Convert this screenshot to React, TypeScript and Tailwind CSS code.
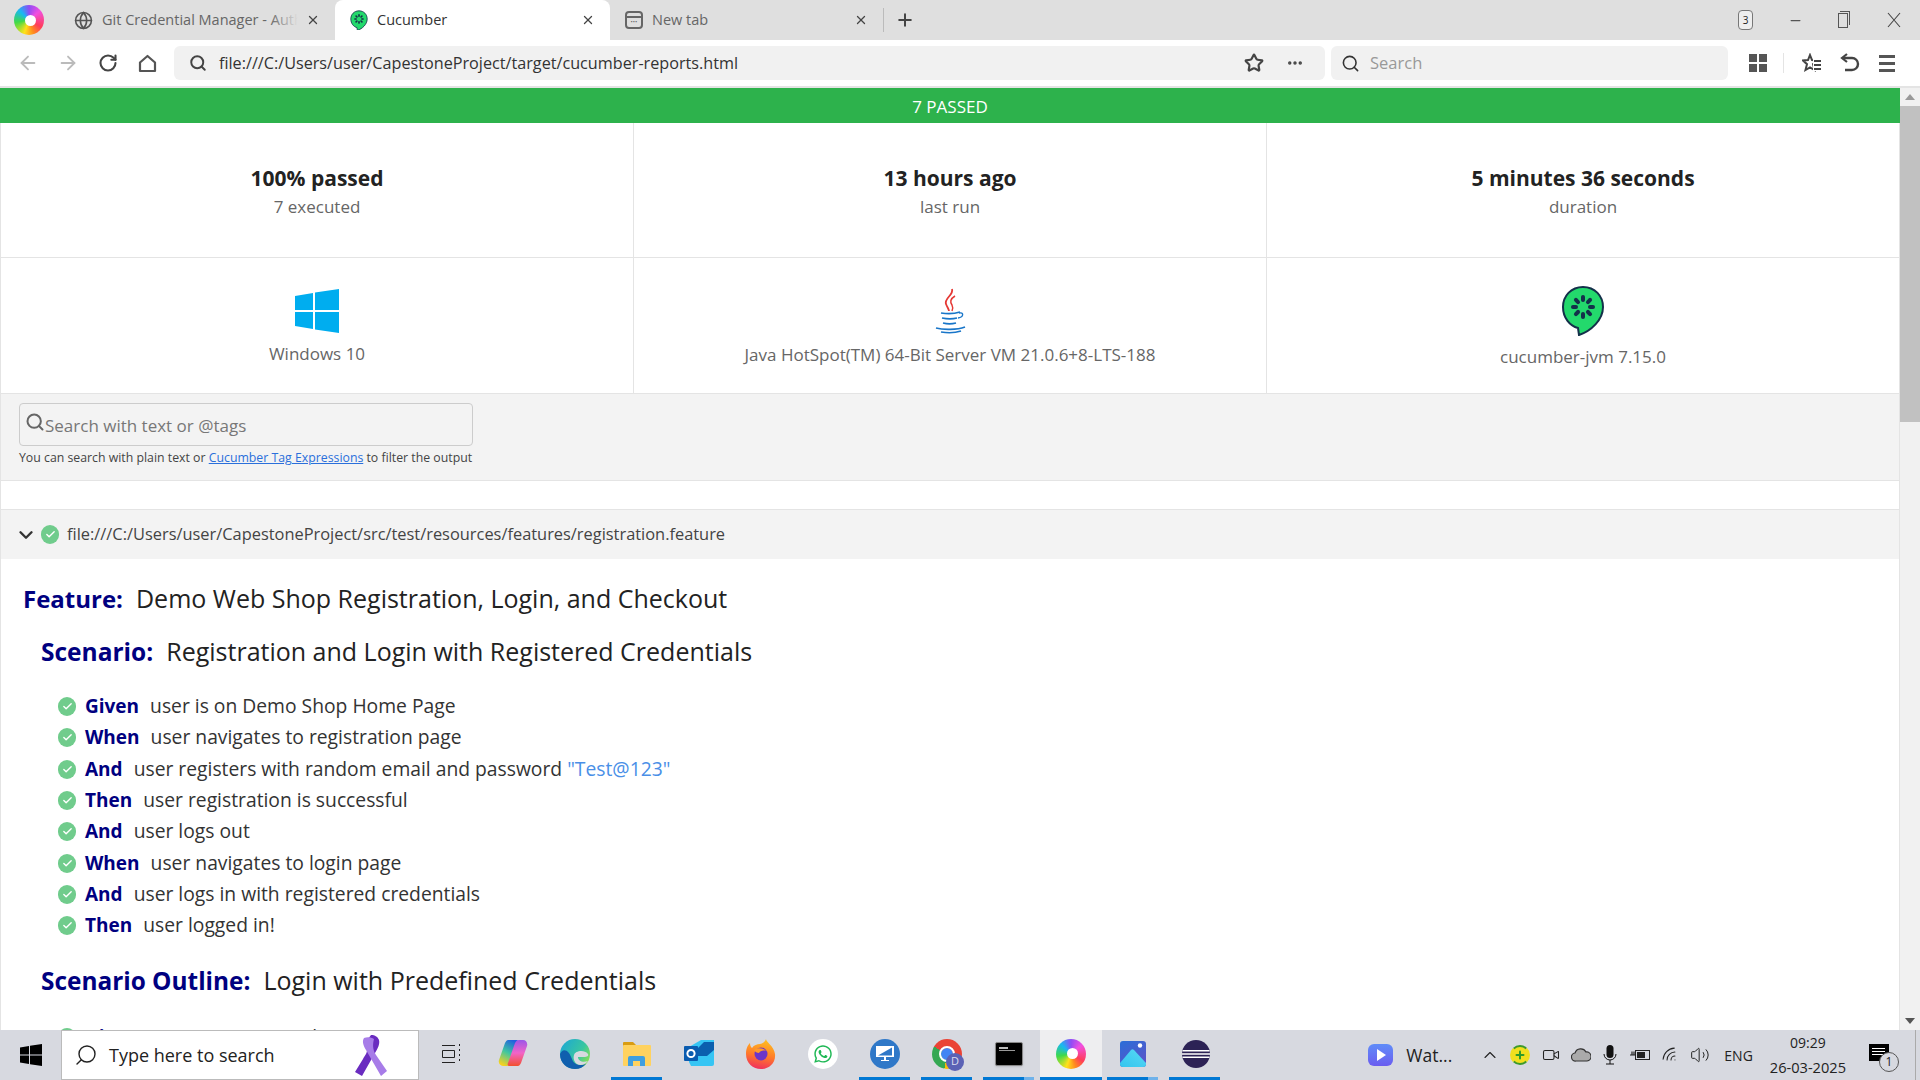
import { ArrowLeft, ArrowRight, RotateCw, Search, Star, MoreHorizontal, Plus, X, Minus, Globe, ChevronDown, ChevronUp, Check, Volume2, Wifi, Video } from "lucide-react";
import { FaWhatsapp } from "react-icons/fa";

const FONT = "font-['Open_Sans','Noto_Sans',sans-serif]";

function SwirlSmall() {
  return (
    <div className="flex h-[30px] w-[30px] items-center justify-center rounded-full bg-[conic-gradient(#8f4cf5,#f14fe0_50deg,#ff3d5a_120deg,#ff8a1f_160deg,#ffe11a_200deg,#3fd94a_260deg,#18b8f2_315deg,#8f4cf5)] blur-[0.5px]">
      <div className="ml-[2px] h-[11px] w-[11px] rounded-full bg-white" />
    </div>
  );
}

function CukeLogo({ size = 44 }: { size?: number }) {
  const seeds = [0, 45, 90, 135, 180, 225, 270, 315];
  return (
    <svg width={size} height={size * 1.16} viewBox="0 0 44 51">
      <path d="M22 2C10 2 2 11 2 22c0 11 7 19 15 21l1 7c12-4 24-15 24-28C42 11 34 2 22 2z" fill="#23d96c" stroke="#14304a" strokeWidth="2" />
      {seeds.map((a) => (
        <rect key={a} x="20" y="10" width="4" height="7" rx="2" fill="#14304a" transform={`rotate(${a} 22 22)`} />
      ))}
    </svg>
  );
}

function WindowsLogo() {
  return (
    <svg width="44" height="44" viewBox="0 0 44 44">
      <path d="M0 7l18-3v17H0zM20 3.6L44 0v21H20zM0 23h18v17L0 37zM20 23h24v21l-24-3.6z" fill="#00adef" />
    </svg>
  );
}

function JavaLogo() {
  return (
    <svg width="34" height="46" viewBox="0 0 34 46" fill="none">
      <path d="M19 1c2 6-8 9-6 15 1 3 3 5 3 7" stroke="#e53935" strokeWidth="1.8" />
      <path d="M22 8c-5 3-5 6-3 9 1 2 1 4 0 6" stroke="#e53935" strokeWidth="1.5" />
      <path d="M8 25c6 1 13 1 19-1M9 30c5 1 11 1 15 0M10 35c4 1 9 1 13 0M3 40c7 2 21 2 29-1M8 44c6 1 14 1 20-1" stroke="#1976c9" strokeWidth="1.7" />
      <path d="M26 25c5-1 5 4-1 5" stroke="#1976c9" strokeWidth="1.4" />
    </svg>
  );
}

function PassIcon({ size = 18 }: { size?: number }) {
  return (
    <span className="flex shrink-0 items-center justify-center rounded-full bg-[#70cc8c]" style={{ width: size, height: size + 1 }}>
      <Check size={size - 7} strokeWidth={3} color="#fff" />
    </span>
  );
}

function BrowserTab({ icon, title, active, fade, width }: { icon: React.ReactNode; title: string; active?: boolean; fade?: boolean; width: string }) {
  return (
    <div className={`flex h-10 items-center ${width} ${active ? "rounded-t-lg bg-white pl-[15px] pr-[15px] text-[#333]" : "pl-[9px] pr-[15px] text-[#666]"}`}>
      {icon}
      <span className="relative ml-[9px] flex-1 overflow-hidden whitespace-nowrap text-[14.5px]">
        {title}
        {fade && <span className="absolute inset-y-0 right-0 w-7 bg-gradient-to-r from-transparent to-[#dfdfdf]" />}
      </span>
      <X size={14} strokeWidth={2.2} className="ml-2 text-[#444]" />
    </div>
  );
}

function SummaryCell({ title, sub }: { title: string; sub: string }) {
  return (
    <div className="flex flex-1 flex-col items-center justify-center border-r border-[#e4e4e4] pt-[2px] last:border-r-0">
      <b className="text-[21px] leading-[30px] text-[#222]">{title}</b>
      <span className="text-[17px] leading-[27px] text-[#666]">{sub}</span>
    </div>
  );
}

function EnvCell({ icon, label }: { icon: React.ReactNode; label: string }) {
  return (
    <div className="flex flex-1 flex-col items-center justify-center gap-2 border-r border-[#e4e4e4] pt-[4px] last:border-r-0">
      {icon}
      <span className="text-[17px] text-[#666]">{label}</span>
    </div>
  );
}

function Step({ word, text, arg }: { word: string; text: string; arg?: string }) {
  return (
    <div className="flex h-[31.3px] items-center gap-[9px]">
      <PassIcon />
      <span className="text-[19.3px] text-[#333]">
        <b className="mr-[11px] text-[19px] text-[#000080]">{word}</b>
        {text}
        {arg && <span className="text-[#4a8fe7]"> {arg}</span>}
      </span>
    </div>
  );
}

function TaskIcon({ children, bar, active, stack }: { children: React.ReactNode; bar?: boolean; active?: boolean; stack?: boolean }) {
  return (
    <div className={`relative flex h-[50px] w-[62px] items-center justify-center pb-[3px] ${active ? "bg-[#eeeef0]" : ""}`}>
      {children}
      {bar && (
        <div className={`absolute bottom-0 flex h-[3px] bg-[#0078d4] ${active ? "inset-x-0" : "left-[5px] right-[6px]"}`}>
          {stack && <div className="ml-auto h-full w-[10px] bg-[#6fb2ea]" />}
        </div>
      )}
    </div>
  );
}

function Copilot() {
  const lobe = "M10 1h8c2 0 3 1 2 3L13 24c-1 2-2 3-4 3H5c-3 0-5-3-4-6L7 4c1-2 2-3 3-3z";
  return (
    <svg width="30" height="30" viewBox="0 0 30 30">
      <defs>
        <linearGradient id="copA" x1="0.7" y1="0" x2="0.3" y2="1">
          <stop offset="0" stopColor="#1f5fe0" />
          <stop offset="0.5" stopColor="#3fc6a0" />
          <stop offset="1" stopColor="#f6d21f" />
        </linearGradient>
        <linearGradient id="copB" x1="0.5" y1="0" x2="0.5" y2="1">
          <stop offset="0" stopColor="#f2502e" />
          <stop offset="0.5" stopColor="#f264c8" />
          <stop offset="1" stopColor="#9a57e8" />
        </linearGradient>
      </defs>
      <path d={lobe} fill="url(#copA)" />
      <path d={lobe} fill="url(#copB)" transform="rotate(180 15 14)" />
    </svg>
  );
}

function Edge() {
  return (
    <svg width="30" height="30" viewBox="0 0 30 30">
      <defs>
        <linearGradient id="edgeA" x1="0" y1="0" x2="1" y2="0.6">
          <stop offset="0" stopColor="#1aa5d8" />
          <stop offset="0.7" stopColor="#39c6a0" />
          <stop offset="1" stopColor="#7fdc5c" />
        </linearGradient>
      </defs>
      <circle cx="15" cy="15" r="15" fill="url(#edgeA)" />
      <path d="M0 15C0 24 7 30 15 30c5 0 8-2 11-5-6 2-12 1-14-5C9 11 3 8 0 15z" fill="#0f5fae" />
      <path d="M14 16c1-4 10-6 14-1 1 2-1 3-4 3h-6c0 4 5 6 10 4-3 4-8 5-11 3-3-2-4-6-3-9z" fill="#d7d9e0" />
    </svg>
  );
}

function FolderIcon() {
  return (
    <svg width="28" height="26" viewBox="0 0 28 26">
      <path d="M0 2a1 1 0 0 1 1-1h9l3 3v3H0z" fill="#d99c12" />
      <rect y="4" width="28" height="21" rx="1" fill="#ffd25f" />
      <path d="M5 25v-8a2 2 0 0 1 2-2h13a2 2 0 0 1 2 2v8h-5v-5H10v5z" fill="#3f9fe0" />
    </svg>
  );
}

function Outlook() {
  return (
    <svg width="30" height="28" viewBox="0 0 30 28">
      <path d="M5 7 17 0h13v24a2 2 0 0 1-2 2H7l-2-4z" fill="#36c5f4" />
      <path d="M14 8 20 2h10v8l-7 6H14z" fill="#0b5fae" />
      <rect x="0" y="6" width="14" height="15" rx="1" fill="#0a5cb0" />
      <circle cx="7" cy="13.5" r="3.6" fill="none" stroke="#fff" strokeWidth="2" />
    </svg>
  );
}

function Firefox() {
  return (
    <svg width="30" height="30" viewBox="0 0 30 30">
      <defs>
        <linearGradient id="foxA" x1="0.6" y1="0" x2="0.4" y2="1">
          <stop offset="0" stopColor="#ffc01f" />
          <stop offset="0.55" stopColor="#ff7a2a" />
          <stop offset="1" stopColor="#f0305e" />
        </linearGradient>
      </defs>
      <path d="M20 0c0 3 8 7 9 15 1 9-6 15-14 15S0 24 0 15C0 9 2 6 4 4c0 3 1 4 2 5 2-3 5-4 8-4 2 0 5-2 6-5z" fill="url(#foxA)" />
      <circle cx="15" cy="15" r="6.5" fill="#6c34c9" />
      <path d="M8 11c4-3 10-2 12 1-3-1-6 0-7 2-2 0-4-1-5-3z" fill="#ff9a2a" />
    </svg>
  );
}

function RemoteIcon() {
  return (
    <div className="flex h-[30px] w-[30px] items-center justify-center rounded-full bg-[#2f78c8]">
      <svg width="18" height="16" viewBox="0 0 18 16">
        <path d="M0 0h18v11H0z" fill="#fff" />
        <path d="M2 9.5 16 1.5V9.5z" fill="#2f78c8" />
        <path d="M8 11h2v3h3v1H5v-1h3z" fill="#fff" />
      </svg>
    </div>
  );
}

function ChromeIcon() {
  return (
    <div className="relative h-[30px] w-[30px] rounded-full bg-[conic-gradient(#ea4335_0_120deg,#fbbc05_120deg_190deg,#34a853_190deg_300deg,#ea4335_300deg)]">
      <div className="absolute left-[9px] top-[9px] h-3 w-3 rounded-full bg-[#4285f4] outline-2 outline-white" />
      <div className="absolute -bottom-[2px] -right-[2px] flex h-[18px] w-[18px] items-center justify-center rounded-full bg-[#5b62b5] text-[11px] text-[#dde]">D</div>
    </div>
  );
}

function CmdIcon() {
  return (
    <div className="h-[24px] w-[28px] rounded-[2px] border border-[#888] bg-black pl-[3px] pt-[4px] shadow-sm">
      <div className="h-[2px] w-[9px] bg-[#bbb]" />
      <div className="mt-[1px] h-[1px] w-[16px] bg-[#999]" />
    </div>
  );
}

function PhotosIcon() {
  return (
    <svg width="26" height="26" viewBox="0 0 26 26">
      <defs>
        <linearGradient id="phoA" x1="0" y1="0" x2="0.6" y2="1">
          <stop offset="0" stopColor="#2a6ed8" />
          <stop offset="1" stopColor="#5a55c8" />
        </linearGradient>
        <linearGradient id="phoB" x1="0" y1="1" x2="1" y2="0">
          <stop offset="0" stopColor="#33c5ee" />
          <stop offset="1" stopColor="#58d8f5" />
        </linearGradient>
      </defs>
      <rect width="26" height="26" rx="3" fill="url(#phoA)" />
      <path d="M0 22 11 9c1-1 2-1 3 0l12 13v1a3 3 0 0 1-3 3H3a3 3 0 0 1-3-3z" fill="url(#phoB)" />
      <circle cx="20" cy="4.5" r="2.2" fill="#fff" />
    </svg>
  );
}

function EclipseIcon() {
  return (
    <svg width="30" height="28" viewBox="0 0 30 28">
      <path d="M14 0A14 14 0 0 0 14 28A14 14 0 0 1 14 0z" fill="#f09a2e" />
      <circle cx="16" cy="14" r="14" fill="#2c2255" />
      <path d="M2.5 10h27v1.6h-27zM2 13.2h28v1.6H2zM2.5 16.4h27V18h-27z" fill="#fff" />
    </svg>
  );
}

function Shield360() {
  return (
    <div className="relative flex h-5 w-5 items-center justify-center rounded-full border-2 border-[#3d9a2b] border-r-[#f1df1f] border-l-[#f1df1f] bg-[#f1df1f]">
      <Plus size={12} strokeWidth={4} className="text-[#2f9a2a]" />
    </div>
  );
}

export default function App() {
  return (
    <div className={`flex h-[1080px] w-[1920px] flex-col overflow-hidden bg-white ${FONT}`}>
      {/* tab strip */}
      <div className="flex h-10 shrink-0 items-center bg-[#dfdfdf]">
        <div className="flex w-[65px] justify-center pr-[7px]"><SwirlSmall /></div>
        <BrowserTab fade width="w-[270px]" title="Git Credential Manager - Auth" icon={<Globe size={19} className="text-[#555]" />} />
        <BrowserTab active width="w-[275px]" title="Cucumber" icon={<CukeLogo size={18} />} />
        <BrowserTab
          width="w-[273px] pl-[15px]"
          title="New tab"
          icon={
            <div className="h-[18px] w-[18px] rounded-sm border-2 border-[#666] pt-[3px]">
              <div className="h-[2px] w-full bg-[#666]" />
              <div className="mt-[3px] text-center text-[6px] leading-[2px] text-[#666]">•••</div>
            </div>
          }
        />
        <div className="h-6 w-px bg-[#bbb]" />
        <Plus size={20} strokeWidth={2.4} className="ml-[11px] text-[#444]" />
        <div className="flex-1" />
        <div className="flex h-5 w-[15px] items-center justify-center rounded-sm border border-[#777] bg-[#eee] text-[10px] text-[#222]">3</div>
        <Minus size={15} className="ml-[35px] text-[#555]" />
        <div className="relative ml-[35px] h-[15px] w-[10px] border border-[#555]">
          <div className="absolute -right-[3px] -top-[3px] h-[14px] w-[10px] border-r border-t border-[#555]" />
        </div>
        <svg className="ml-[39px] mr-[19px]" width="14" height="16" viewBox="0 0 14 16"><path d="M1 1l12 14M13 1L1 15" stroke="#444" strokeWidth="1.1" /></svg>
      </div>

      {/* toolbar */}
      <div className="flex h-[48px] shrink-0 items-center border-b-2 border-[#e4e4e4] pl-[17px]">
        <ArrowLeft size={22} className="text-[#bbb]" />
        <ArrowRight size={22} className="ml-[18px] text-[#bbb]" />
        <RotateCw size={20} strokeWidth={2.5} className="ml-[19px] text-[#444]" />
        <svg className="ml-[20px]" width="19" height="19" viewBox="0 0 19 19" fill="none"><path d="M2 8.5 9.5 2 17 8.5V17H2z" stroke="#555" strokeWidth="2.2" strokeLinejoin="round" /></svg>
        <div className="ml-[17px] flex h-[34px] w-[1151px] items-center rounded-md bg-[#f1f1f1] pl-[15px] pr-[17px] text-[16.2px] text-[#333]">
          <Search size={18} strokeWidth={2.6} className="mr-[12px] text-[#444]" />
          <span className="flex-1">file:///C:/Users/user/CapestoneProject/target/cucumber-reports.html</span>
          <Star size={20} strokeWidth={2.6} className="mr-[22px] text-[#444]" />
          <MoreHorizontal size={18} strokeWidth={2.6} className="mr-[4px] text-[#444]" />
        </div>
        <div className="ml-[6px] flex h-[34px] w-[397px] items-center rounded-md bg-[#f1f1f1] px-[10px] text-[16.5px] text-[#999]">
          <Search size={19} className="mr-[10px] text-[#333]" />
          Search
        </div>
        <div className="ml-[21px] grid grid-cols-2 gap-[2px]">
          <span className="h-2 w-2 bg-[#555]" />
          <span className="h-2 w-2 bg-[#555]" />
          <span className="h-2 w-2 bg-[#555]" />
          <span className="h-2 w-2 bg-[#555]" />
        </div>
        <div className="ml-[16px] h-5 w-px bg-[#e4e4e4]" />
        <svg className="ml-[18px]" width="20" height="20" viewBox="0 0 20 20" fill="none">
          <path d="M8 2l2 5 5 .5-4 3.700L12.500 17 8 14.300 3.500 17 5 11.200 1 7.500 6 7z" stroke="#444" strokeWidth="2" />
          <rect x="11" y="5" width="9" height="13" fill="#fff" />
          <path d="M12 8h7M12 12h7M12 16h7" stroke="#444" strokeWidth="2" />
        </svg>
        <svg className="ml-[18px]" width="20" height="20" viewBox="0 0 20 20" fill="none">
          <path d="M7 1 2 5l5 4" stroke="#444" strokeWidth="2.2" />
          <path d="M3 5h9a5 5 0 0 1 0 12H5" stroke="#444" strokeWidth="2.4" />
        </svg>
        <div className="ml-[19px] flex w-[16px] flex-col gap-[4px]">
          <span className="h-[3px] bg-[#555]" />
          <span className="h-[3px] bg-[#555]" />
          <span className="h-[3px] bg-[#555]" />
        </div>
      </div>

      {/* page */}
      <div className="flex min-h-0 flex-1">
        <div className="min-w-0 flex-1 overflow-hidden">
          <div className="flex h-[35px] items-center justify-center bg-[#2db24c] pt-[2px] text-[17px] text-white">7 PASSED</div>
          <div className="border-x border-[#e4e4e4]">
            <div className="flex h-[135px] border-b border-[#e4e4e4]">
              <SummaryCell title="100% passed" sub="7 executed" />
              <SummaryCell title="13 hours ago" sub="last run" />
              <SummaryCell title="5 minutes 36 seconds" sub="duration" />
            </div>
            <div className="flex h-[136px] border-b border-[#e4e4e4]">
              <EnvCell icon={<WindowsLogo />} label="Windows 10" />
              <EnvCell icon={<JavaLogo />} label="Java HotSpot(TM) 64-Bit Server VM 21.0.6+8-LTS-188" />
              <EnvCell icon={<CukeLogo />} label="cucumber-jvm 7.15.0" />
            </div>
            <div className="h-[87px] border-b border-[#e4e4e4] bg-[#f3f3f3] pl-[18px] pt-[9px]">
              <div className="flex h-[43px] w-[454px] items-center rounded border border-[#ccc] pl-[5px] pt-[2px] text-[17px] text-[#777]">
                <Search size={20} strokeWidth={2.4} className="-mt-2 text-[#666]" />
                Search with text or @tags
              </div>
              <div className="mt-[3px] text-[12.3px] text-[#444]">
                You can search with plain text or <a className="text-[#2a6fdb] underline">Cucumber Tag Expressions</a> to filter the output
              </div>
            </div>
            <div className="mt-7 flex h-[50px] items-center border-t border-[#e4e4e4] bg-[#f3f3f3] pl-[14px] text-[16.4px] text-[#444]">
              <ChevronDown size={22} className="text-[#333]" strokeWidth={2.6} />
              <span className="ml-[4px] mr-[8px]"><PassIcon /></span>
              file:///C:/Users/user/CapestoneProject/src/test/resources/features/registration.feature
            </div>
            <div className="pl-[22px] pt-[21px] text-[#222]">
              <h1 className="text-[25px] leading-9"><b className="mr-[13px] text-[24px] text-[#000080]">Feature:</b>Demo Web Shop Registration, Login, and Checkout</h1>
              <div className="pl-[18px]">
                <h2 className="mt-[16px] text-[25px] leading-9"><b className="mr-[13px] text-[24.5px] text-[#000080]">Scenario:</b>Registration and Login with Registered Credentials</h2>
                <div className="mt-[21px] pl-[17px]">
                  <Step word="Given" text="user is on Demo Shop Home Page" />
                  <Step word="When" text="user navigates to registration page" />
                  <Step word="And" text="user registers with random email and password" arg={'"Test@123"'} />
                  <Step word="Then" text="user registration is successful" />
                  <Step word="And" text="user logs out" />
                  <Step word="When" text="user navigates to login page" />
                  <Step word="And" text="user logs in with registered credentials" />
                  <Step word="Then" text="user logged in!" />
                </div>
                <h2 className="mt-[21px] text-[25px] leading-9"><b className="mr-[13px] text-[24.4px] text-[#000080]">Scenario Outline:</b>Login with Predefined Credentials</h2>
                <div className="mt-[22px] pl-[17px]">
                  <Step word="Given" text="user is on Demo Shop Home Page" />
                </div>
              </div>
            </div>
          </div>
        </div>
        <div className="flex w-5 shrink-0 flex-col items-center bg-[#f1f1f1]">
          <div className="mt-[6px] h-0 w-0 border-x-[5px] border-b-[6px] border-x-transparent border-b-[#999]" />
          <div className="mt-[6px] h-[316px] w-full bg-[#c1c1c1]" />
          <div className="flex-1" />
          <div className="mb-[6px] h-0 w-0 border-x-[5px] border-t-[6px] border-x-transparent border-t-[#555]" />
        </div>
      </div>

      {/* taskbar */}
      <div className="relative flex h-[50px] shrink-0 items-center bg-[#d7d9e0]">
        <div className="flex w-[61px] justify-center">
          <svg width="22" height="22" viewBox="0 0 44 44"><path d="M0 7l18-3v17H0zM20 3.6L44 0v21H20zM0 23h18v17L0 37zM20 23h24v21l-24-3.6z" fill="#000" /></svg>
        </div>
        <div className="flex h-[50px] w-[358px] items-center border border-[#bbb] bg-white pl-[12px] text-[18px] text-[#222]">
          <Search size={24} className="mr-[11px] -scale-x-100" strokeWidth={1.4} />
          Type here to search
          <svg className="ml-[78px]" width="36" height="44" viewBox="0 0 36 44">
            <path d="M18 2c4 0 7 2 8 5 1 4-1 8-4 13L9 43l-7-4 8-13C12 22 15 20 14 13l1-7z" fill="#6a2cc0" />
            <path d="M11 5c-2 3-1 7 2 12l15 26 6-5-11-16C19 16 20 10 21 6 18 4 14 4 11 5z" fill="#a77ce8" />
          </svg>
        </div>
        <div className="ml-px flex">
          <TaskIcon>
            <svg width="20" height="20" viewBox="0 0 20 20" fill="none" stroke="#222"><path d="M1 1.5h13M1 18.5h13M1.5 6.5h12v7h-12z" /><path d="M18 1h1M18 6h1M18 11h1M18 16h1" strokeWidth="2" /></svg>
          </TaskIcon>
          <TaskIcon><Copilot /></TaskIcon>
          <TaskIcon><Edge /></TaskIcon>
          <TaskIcon bar><FolderIcon /></TaskIcon>
          <TaskIcon><Outlook /></TaskIcon>
          <TaskIcon><Firefox /></TaskIcon>
          <TaskIcon>
            <div className="flex h-[30px] w-[30px] items-center justify-center rounded-full bg-white"><FaWhatsapp size={20} color="#1fb855" /></div>
          </TaskIcon>
          <TaskIcon bar><RemoteIcon /></TaskIcon>
          <TaskIcon bar><ChromeIcon /></TaskIcon>
          <TaskIcon bar stack><CmdIcon /></TaskIcon>
          <TaskIcon bar active><SwirlSmall /></TaskIcon>
          <TaskIcon bar stack><PhotosIcon /></TaskIcon>
          <TaskIcon bar><EclipseIcon /></TaskIcon>
        </div>
        <div className="flex-1" />
        <div className="flex items-center text-[#222]">
          <div className="flex h-[22px] w-[25px] items-center justify-center rounded-md bg-gradient-to-b from-[#5f8cf8] to-[#6a5cf0]"><div className="ml-px h-0 w-0 border-y-[6px] border-l-[9px] border-y-transparent border-l-white" /></div>
          <span className="ml-[13px] w-[69px] text-[17.5px]">Wat...</span>
          <span className="flex w-[30px] justify-center"><ChevronUp size={20} strokeWidth={1.3} /></span>
          <span className="flex w-[30px] justify-center"><Shield360 /></span>
          <span className="flex w-[31px] justify-center"><Video size={18} strokeWidth={1.4} /></span>
          <span className="flex w-[29px] justify-center">
            <svg width="20" height="14" viewBox="0 0 20 14"><path d="M5 13a4 4 0 0 1-1-8 6 6 0 0 1 11-1 4.500 4.500 0 0 1 1 9z" fill="#aaa" stroke="#333" strokeWidth="1.2" /></svg>
          </span>
          <span className="flex w-[30px] justify-center">
            <svg width="14" height="20" viewBox="0 0 14 20"><rect x="3.500" width="7" height="13" rx="3.500" fill="#111" /><path d="M1 9a6 6 0 0 0 12 0M7 15v4M3 19h8" stroke="#111" fill="none" /></svg>
          </span>
          <span className="flex w-[30px] justify-center">
            <svg width="20" height="12" viewBox="0 0 20 12"><rect x="5.500" y="1.500" width="14" height="9" fill="none" stroke="#222" /><rect x="7" y="3" width="8" height="6" fill="#222" /><path d="M0 6h6M2 2.500v3M4 2.500v3" stroke="#222" strokeWidth="1.2" /></svg>
          </span>
          <span className="flex w-[31px] justify-center"><Wifi size={19} strokeWidth={1.3} className="-rotate-45" /></span>
          <span className="flex w-[28px] justify-center"><Volume2 size={20} strokeWidth={1.2} /></span>
          <span className="ml-[10px] text-[14px]">ENG</span>
          <div className="ml-[17px] flex flex-col items-center leading-[24px]">
            <span className="text-[14px]">09:29</span>
            <span className="text-[14.6px]">26-03-2025</span>
          </div>
          <div className="relative ml-[23px] mb-[6px] h-[17px] w-5 bg-black pl-[3px] pt-[4px]">
            <div className="h-px w-[13px] bg-white" />
            <div className="mt-[2px] h-px w-[13px] bg-white" />
            <div className="mt-[2px] h-px w-[13px] bg-white" />
            <div className="absolute -bottom-[11px] -right-[10px] flex h-[20px] w-[20px] items-center justify-center rounded-full border border-[#555] bg-[#d7d9e0] text-[12px]">1</div>
          </div>
          <div className="ml-[26px] h-[50px] w-px bg-[#aaa]" />
          <div className="w-[4px]" />
        </div>
      </div>
    </div>
  );
}
